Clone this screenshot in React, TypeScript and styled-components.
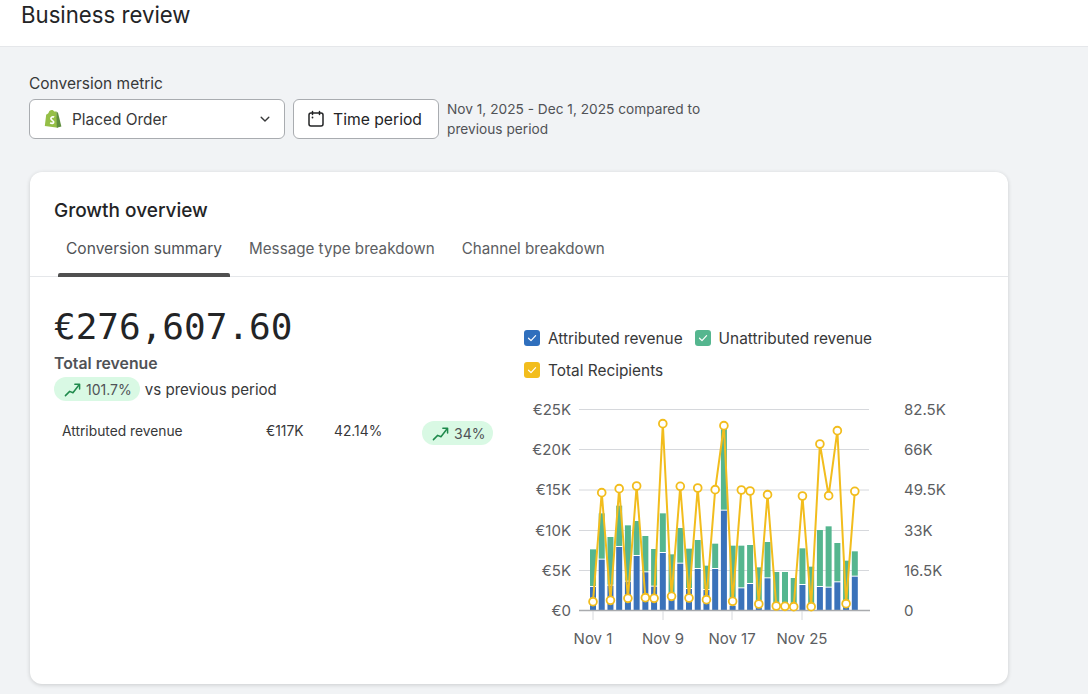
import React from "react";
import styled, { createGlobalStyle } from "styled-components";

const Global = createGlobalStyle`
  html, body { margin: 0; padding: 0; background: #f1f3f5; }
  body { font-family: Inter, "Liberation Sans", sans-serif; color: #232426; overflow: hidden; }
`;
const Page = styled.div`width: 1088px; height: 694px; overflow: hidden; display: flex; flex-direction: column;`;
const Header = styled.header`height: 47px; flex: none; box-sizing: border-box; background: #fff; border-bottom: 1px solid #e5e7ea; padding-left: 21px;`;
const Title = styled.h1`margin: 0; font-size: 22.2px; line-height: 29px; font-weight: 400; color: #232426;`;
const Main = styled.main`padding: 27px 80px 0 29px; display: flex; flex-direction: column;`;
const FieldLabel = styled.div`font-size: 15.5px; line-height: 20px; color: #373839; margin-bottom: 5px;`;
const Controls = styled.div`display: flex; align-items: center; gap: 8px; height: 40px;`;
const Select = styled.div`width: 256px; height: 40px; box-sizing: border-box; background: #fff; border: 1px solid #a9acb0; border-radius: 6px; display: flex; align-items: center; padding: 0 13px 0 14px; font-size: 15.4px; color: #373839;`;
const SelectText = styled.span`flex: 1; margin-left: 10px;`;
const TimeButton = styled.button`width: 146px; height: 40px; box-sizing: border-box; background: #fff; border: 1px solid #a9acb0; border-radius: 6px; display: flex; align-items: center; gap: 8px; padding: 0 0 0 13px; font: 400 15.7px Inter, sans-serif; color: #232426;`;
const Range = styled.div`width: 270px; font-size: 13.7px; line-height: 20px; color: #505256;`;
const Card = styled.section`margin: 33px 0 0 1px; height: 512px; box-sizing: border-box; background: #fff; border-radius: 12px; box-shadow: 0 1px 4px rgba(0,0,0,.16); padding-top: 26px; display: flex; flex-direction: column;`;
const CardTitle = styled.h2`margin: 0 0 0 24px; font-size: 19px; line-height: 25px; font-weight: 500; color: #232426;`;
const Tabs = styled.div`display: flex; gap: 11px; margin-top: 10px; padding-left: 28px; border-bottom: 1px solid #e5e7ea; height: 44px; box-sizing: border-box;`;
const Tab = styled.div<{ $active?: boolean }>`
  position: relative; padding: 4px 8px 0; font-size: ${p => p.$active ? "15.55px" : "15.2px"}; line-height: 24px; color: ${p => p.$active ? "#505256" : "#5c5e62"}; white-space: nowrap;
  ${p => p.$active ? `&::after { content: ""; position: absolute; left: 0; right: 0; bottom: -1px; height: 4px; background: #505050; border-radius: 2px 2px 0 0; }` : ""}
`;
const Body = styled.div`display: flex; padding-left: 24px;`;
const Left = styled.div`width: 470px; flex: none; padding-top: 28px;`;
const BigValue = styled.div`font-family: "DejaVu Sans Mono", monospace; font-size: 36px; line-height: 44px; color: #232426;`;
const MetricName = styled.div`margin-top: 3px; font-size: 15.8px; line-height: 24px; font-weight: 600; color: #505256;`;
const CompareRow = styled.div`display: flex; align-items: center; gap: 5px; margin-top: 1px; font-size: 15.1px; color: #373839;`;
const Badge = styled.span`display: inline-flex; align-items: center; gap: 5px; height: 24px; padding: 0 8px 0 10px; background: #d9f9e4; border-radius: 12px; font-size: 14px; color: #505256;`;
const BreakdownRow = styled.div`display: flex; align-items: center; height: 24px; margin-top: 20px; padding-left: 8px; font-size: 13.8px; color: #373839;`;
const RowName = styled.span`width: 204px; padding-bottom: 4px;`;
const RowValue = styled.span`width: 68px; padding-bottom: 4px;`;
const RowShare = styled.span`width: 88px; padding-bottom: 4px;`;
const Right = styled.div`flex: 1; padding-top: 49px; display: flex; flex-direction: column;`;
const Legend = styled.div`display: flex; flex-wrap: wrap; column-gap: 12px; row-gap: 8px; width: 400px;`;
const LegendItem = styled.div`display: flex; align-items: center; gap: 8px; height: 24px; font-size: 15.4px; color: #373839;`;
const Check = styled.span<{ $color: string }>`width: 16px; height: 16px; border-radius: 3px; background: ${p => p.$color}; display: flex; align-items: center; justify-content: center;`;
const ChartSvg = styled.svg`display: block; margin: 14px 0 0 -24px;`;

const Shopify = () => (
  <svg width="18" height="20" viewBox="0 0 18 20">
    <path d="M2.2 5.4 C3.4 5 4.2 4.6 4.7 3.4 C5.3 1.8 6.6 1 7.8 1 C9 1 9.8 1.6 10.2 2.6 L12.4 2.4 L14 18.8 L0.8 17 Z" fill="#95BF47" />
    <path d="M12.4 2.4 L14 3.8 L17.4 17.6 L12.8 18.8 Z" fill="#5E8E3E" />
    <path d="M10.2 8.1 C8.8 7.4 6.9 7.9 6.9 9.6 C6.9 11.3 9.7 11.4 9.7 13.1 C9.7 14.6 7.6 14.7 6.2 13.7" fill="none" stroke="#fff" strokeWidth="1.7" />
  </svg>
);
const Chevron = () => (
  <svg width="12" height="12" viewBox="0 0 12 12"><path d="M2.2 4.2 6 8 9.8 4.2" fill="none" stroke="#373839" strokeWidth="1.4" strokeLinecap="round" strokeLinejoin="round" /></svg>
);
const Calendar = () => (
  <svg width="18" height="18" viewBox="0 0 18 18" fill="none" stroke="#232426" strokeWidth="1.5" strokeLinecap="round">
    <rect x="2" y="3" width="14" height="13" rx="2" />
    <path d="M5.5 1.5v3M12.5 1.5v3" />
    <circle cx="5.5" cy="7.5" r=".9" fill="#232426" stroke="none" />
  </svg>
);
const Trend = () => (
  <svg width="17" height="17" viewBox="0 0 18 18" fill="none" stroke="#1f8a4c" strokeWidth="1.6" strokeLinecap="round" strokeLinejoin="round">
    <path d="M1.5 15.5 6 11 9.5 12.5 16 4" />
    <path d="M11.5 3.5H16.5V8.5" />
  </svg>
);
const Tick = () => (
  <svg width="12" height="12" viewBox="0 0 12 12"><path d="M2.5 6.2 5 8.6 9.6 3.6" fill="none" stroke="#fff" strokeWidth="1.2" strokeLinecap="round" strokeLinejoin="round" /></svg>
);

const xs = Array.from({ length: 31 }, (_, i) => 593 + i * 8.727);
const py = (v: number) => 410 + v / 3;
const blue = [531, 449, 527, 411, 515, 438, 487, 530, 429, 570, 461, 537, 477, 540, 477, 302, 587, 535, 522, 590, 505, 601, 601, 601, 525, 595, 531, 533, 517, 590, 500];
const green = [418, 310, 381, 287, 346, 333, 378, 417, 310, 433, 354, 416, 390, 467, 401, 55, 407, 407, 405, 472, 396, 486, 486, 504, 415, 470, 360, 349, 399, 452, 424];
const line = [575, 248, 571, 236, 565, 228, 563, 565, 41, 559, 229, 564, 234, 569, 239, 47, 574, 240, 243, 582, 254, 588, 589, 590, 258, 590, 102, 257, 62, 581, 244];
const gridY = [409.5, 449.5, 490, 530.5, 570.5];
const leftLabels = ["€25K", "€20K", "€15K", "€10K", "€5K", "€0"];
const rightLabels = ["82.5K", "66K", "49.5K", "33K", "16.5K", "0"];
const labelY = [409.5, 449.5, 490, 530.5, 570.5, 611];
const base = 610.5;
const ox = 500, oy = 396;

const Chart = () => (
  <ChartSvg width="460" height="256" viewBox={`${ox} ${oy} 460 256`}>
    {gridY.map(y => <line key={y} x1="579" x2="869" y1={y} y2={y} stroke="#d6d8dc" strokeWidth="1" />)}
    {xs.map((x, i) => (
      <g key={i}>
        <rect x={x - 3} width="6" y={py(green[i])} height={Math.max(0, py(blue[i]) - py(green[i]) - 1)} fill="#55b68f" />
        {blue[i] < 601 && <rect x={x - 3} width="6" y={py(blue[i])} height={base - py(blue[i])} fill="#3a72ba" />}
      </g>
    ))}
    <line x1="579" x2="870" y1={base} y2={base} stroke="#a9abae" strokeWidth="1.5" />
    {[593, 663, 732, 802].map(x => <line key={x} x1={x} x2={x} y1="611" y2="620" stroke="#d6d8dc" />)}
    <polyline points={xs.map((x, i) => `${x},${py(line[i])}`).join(" ")} fill="none" stroke="#f2bd1d" strokeWidth="2" strokeLinejoin="round" />
    {xs.map((x, i) => <circle key={i} cx={x} cy={py(line[i])} r="3.9" fill="#fff" stroke="#f2bd1d" strokeWidth="1.8" />)}
    {leftLabels.map((t, i) => <text key={t} x="571" y={labelY[i]} dy="5.3" textAnchor="end" fontFamily="Inter" fontSize="15" fill="#5c5e62">{t}</text>)}
    {rightLabels.map((t, i) => <text key={t} x="904" y={labelY[i]} dy="5.3" fontFamily="Inter" fontSize="15" fill="#5c5e62">{t}</text>)}
    {[["Nov 1", 593], ["Nov 9", 663], ["Nov 17", 732], ["Nov 25", 802]].map(([t, x]) => <text key={t as string} x={x as number} y="643.5" textAnchor="middle" fontFamily="Inter" fontSize="15" fill="#5c5e62">{t}</text>)}
  </ChartSvg>
);

export default function App() {
  return (
    <Page>
      <Global />
      <Header><Title>Business review</Title></Header>
      <Main>
        <FieldLabel>Conversion metric</FieldLabel>
        <Controls>
          <Select><Shopify /><SelectText>Placed Order</SelectText><Chevron /></Select>
          <TimeButton><Calendar />Time period</TimeButton>
          <Range>Nov 1, 2025 - Dec 1, 2025 compared to previous period</Range>
        </Controls>
        <Card>
          <CardTitle>Growth overview</CardTitle>
          <Tabs>
            <Tab $active>Conversion summary</Tab>
            <Tab>Message type breakdown</Tab>
            <Tab>Channel breakdown</Tab>
          </Tabs>
          <Body>
            <Left>
              <BigValue>€276,607.60</BigValue>
              <MetricName>Total revenue</MetricName>
              <CompareRow><Badge><Trend />101.7%</Badge>vs previous period</CompareRow>
              <BreakdownRow>
                <RowName>Attributed revenue</RowName>
                <RowValue>€117K</RowValue>
                <RowShare>42.14%</RowShare>
                <Badge><Trend />34%</Badge>
              </BreakdownRow>
            </Left>
            <Right>
              <Legend>
                <LegendItem><Check $color="#2f6fbd"><Tick /></Check>Attributed revenue</LegendItem>
                <LegendItem><Check $color="#55b68f"><Tick /></Check>Unattributed revenue</LegendItem>
                <LegendItem><Check $color="#f2bd1d"><Tick /></Check>Total Recipients</LegendItem>
              </Legend>
              <Chart />
            </Right>
          </Body>
        </Card>
      </Main>
    </Page>
  );
}
